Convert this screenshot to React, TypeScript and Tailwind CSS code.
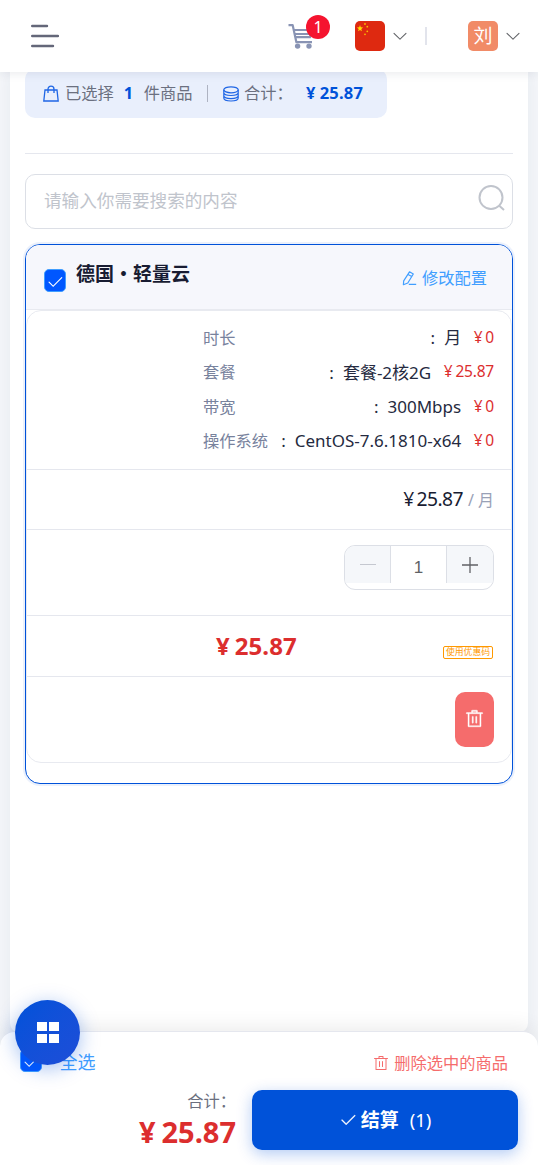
import type { ReactNode } from "react";

const CHECK =
  "M406.656 706.944 195.84 496.256a32 32 0 1 0-45.248 45.248l256 256 512-512a32 32 0 0 0-45.248-45.248L406.592 706.944z";
const TRASH =
  "M160 256H96a32 32 0 0 1 0-64h256V95.936a32 32 0 0 1 32-32h256a32 32 0 0 1 32 32V192h256a32 32 0 1 1 0 64h-64v672a32 32 0 0 1-32 32H192a32 32 0 0 1-32-32zm448-64v-64H416v64zM224 896h576V256H224zm192-128a32 32 0 0 1-32-32V416a32 32 0 0 1 64 0v320a32 32 0 0 1-32 32m192 0a32 32 0 0 1-32-32V416a32 32 0 0 1 64 0v320a32 32 0 0 1-32 32";
const ARROW_DOWN =
  "M831.872 340.864 512 652.672 192.128 340.864a30.592 30.592 0 0 0-42.752 0 29.12 29.12 0 0 0 0 41.6L489.664 714.24a32 32 0 0 0 44.672 0l340.288-331.712a29.12 29.12 0 0 0 0-41.728 30.592 30.592 0 0 0-42.752 0z";

function Glyph({ d, className }: { d: string; className: string }) {
  return (
    <svg viewBox="0 0 1024 1024" fill="currentColor" className={className}>
      <path d={d} />
    </svg>
  );
}

function Price({ value, className, yen }: { value: string; className: string; yen: string }) {
  return (
    <span className={`flex whitespace-nowrap ${className}`}>
      <span className={yen}>¥</span>
      <span>{value}</span>
    </span>
  );
}

function Checkbox({ className }: { className: string }) {
  return (
    <span className={`flex h-[22.5px] w-[21.5px] shrink-0 items-center justify-center rounded-[5px] border border-[#409eff] bg-[#0057ff] text-white ${className}`}>
      <Glyph d={CHECK} className="mt-[3px] h-[18px] w-[18px] shrink-0" />
    </span>
  );
}

function Header() {
  return (
    <header className="relative z-10 flex h-[72px] shrink-0 items-center bg-white shadow-[0_1px_10px_rgba(30,35,70,0.1)]">
      <svg viewBox="0 0 28 24" className="ml-[31px] h-6 w-7" stroke="#646779" strokeWidth="2.4" strokeLinecap="round">
        <path d="M1.2 2H16M1.2 12H27M1.2 22H22" />
      </svg>
      <div className="relative ml-[229px] h-[25px] w-[26px]">
        <svg viewBox="0 0 26 25" className="h-[25px] w-[26px]" fill="none" stroke="#8994b4" strokeWidth="2.2">
          <path d="M.5 1.2H4.7L8.4 18.2H24M5.8 6H23.5L22 13.2H7.5M6.7 10H22" strokeLinejoin="round" />
          <circle cx="9.6" cy="22.1" r="2.7" fill="#8994b4" stroke="none" />
          <circle cx="21" cy="22.1" r="2.7" fill="#8994b4" stroke="none" />
        </svg>
        <span className="absolute top-[-9px] left-[18px] flex h-6 w-6 items-center justify-center rounded-full bg-[#f5142f] text-[16px] leading-none text-white">
          1
        </span>
      </div>
      <svg viewBox="0 0 30 30" className="ml-[41px] h-[30px] w-[30px] rounded-[5px]">
        <rect width="30" height="30" fill="#de2910" />
        <g fill="#ffde00">
          <path d="M5 4 5.8 6.3 8.1 6.4 6.3 7.9 6.9 10.3 5 9 3.1 10.3 3.7 7.9 1.9 6.4 4.2 6.3Z" />
          <g opacity=".8">
            <circle cx="10" cy="3" r=".9" />
            <circle cx="12.3" cy="5.7" r=".9" />
            <circle cx="12.3" cy="10.3" r=".9" />
            <circle cx="10" cy="13.3" r=".9" />
          </g>
        </g>
      </svg>
      <Glyph d={ARROW_DOWN} className="ml-[6px] h-[18px] w-[18px] text-[#606266]" />
      <span className="ml-[16px] h-[18px] w-[2px] bg-[#e2e4ec]" />
      <span className="ml-[41px] flex h-[30px] w-[30px] items-center justify-center rounded-[5px] bg-[#f18b67] text-[19px] leading-none text-white">
        刘
      </span>
      <Glyph d={ARROW_DOWN} className="ml-[6px] h-[18px] w-[18px] text-[#606266]" />
    </header>
  );
}

function Summary() {
  return (
    <div className="mt-[-3px] flex h-[49px] w-[362px] items-center rounded-[10px] bg-[#e9effc] pl-[18px] text-[16.25px] text-[#6b7080]">
      <svg viewBox="0 0 16 17" className="h-[17px] w-4" fill="none" stroke="#1f66e5" strokeWidth="1.3">
        <path d="M2 5H14L15.2 16H.8ZM5 8V4.2a3 3 0 0 1 6 0V8" />
      </svg>
      <span className="ml-[6px]">已选择</span>
      <span className="ml-[10px] w-5 font-bold text-[#0052d9]">1</span>
      <span>件商品</span>
      <span className="ml-[14px] h-[17px] w-[1.5px] bg-[#aeb3c2]" />
      <svg viewBox="0 0 16 16" className="ml-[15px] h-4 w-4" fill="none" stroke="#1f66e5" strokeWidth="1.2">
        <ellipse cx="8" cy="3.8" rx="7.2" ry="3" />
        <path d="M.8 3.8V12c0 4 14.4 4 14.4 0V3.8M.8 6.5c0 4 14.4 4 14.4 0M.8 9.6c0 4 14.4 4 14.4 0" />
      </svg>
      <span className="ml-[5px] w-[62px]">合计：</span>
      <Price value="25.87" yen="mr-[4px]" className="text-[16.5px] font-bold tracking-[0.2px] text-[#0052d9]" />
    </div>
  );
}

const SPECS = [
  { label: "时长", value: "月", price: "0" },
  { label: "套餐", value: "套餐-2核2G", price: "25.87" },
  { label: "带宽", value: "300Mbps", price: "0" },
  { label: "操作系统", value: "CentOS-7.6.1810-x64", price: "0" },
];

function Section({ className, children }: { className: string; children: ReactNode }) {
  return <div className={`flex border-b border-[#e5e7ee] pr-[17px] ${className}`}>{children}</div>;
}

function ProductCard() {
  return (
    <section className="mt-[15px] flex h-[540px] flex-col overflow-hidden rounded-[15px] border border-[#0052d9] bg-white shadow-[0_0_0_2px_rgba(0,82,217,0.08)]">
      <div className="flex h-[65px] shrink-0 border-b border-[#e8eaf0] bg-[#f6f7fc] pl-[18px]">
        <Checkbox className="mt-6" />
        <h2 className="mt-4 ml-[10.5px] text-[19px] leading-[26px] font-bold text-[#181c32]">德国・轻量云</h2>
        <div className="mt-[21px] mr-[25px] ml-auto flex h-6 items-center text-[16.25px] text-[#409eff]">
          <svg viewBox="0 0 15 16" className="mr-[5px] h-4 w-[15px]" fill="none" stroke="currentColor" strokeWidth="1.2">
            <path d="M7.5 1.8 11.3 4 5.8 13 1.4 14.7 1.7 10.8ZM6 4.4 9.8 6.6M6.8 14.3H14.2" strokeLinejoin="round" />
          </svg>
          修改配置
        </div>
      </div>
      <div className="h-[453px] overflow-hidden rounded-[15px] border border-[#e8eaf0] bg-white">
        <Section className="h-[159px] flex-col items-end pt-[10px]">
          {SPECS.map((s) => (
            <div key={s.label} className="flex h-[34.3px] w-[291px] items-center text-[17px] text-[#252a40]">
              <span className="text-[16.25px] text-[#78829d]">{s.label}</span>
              <span className="mr-[9px] ml-auto">:</span>
              <span className="whitespace-nowrap">{s.value}</span>
              <Price value={s.price} yen="mr-[3px]" className="mb-px ml-[12.5px] text-[15.5px] tracking-[-0.2px] text-[#dc2e2e]" />
            </div>
          ))}
        </Section>
        <Section className="h-[60px] items-center justify-end text-[#181c32]">
          <Price value="25.87" yen="mr-[3px]" className="mb-px text-[19.3px] tracking-[-0.6px]" />
          <span className="ml-[5px] text-[16px] text-[#99a1b7]">/ 月</span>
        </Section>
        <Section className="h-[86px] items-start justify-end pt-[15px]">
          <div className="flex h-[45px] w-[150px] overflow-hidden rounded-[11px] border border-[#dcdfe6]">
            <span className="flex h-[37px] w-[46px] items-center justify-center border-r border-[#dcdfe6] bg-[#f5f7fa]">
              <span className="h-[1.5px] w-4 bg-[#c5c8d0]" />
            </span>
            <span className="flex flex-1 items-center justify-center font-['Liberation_Sans'] text-[17px] text-[#606266]">1</span>
            <span className="flex h-[37px] w-[47px] items-center justify-center border-l border-[#dcdfe6] bg-[#f5f7fa]">
              <svg viewBox="0 0 16 16" className="h-4 w-4" stroke="#606266" strokeWidth="1.3">
                <path d="M0 8H16M8 0V16" />
              </svg>
            </span>
          </div>
        </Section>
        <Section className="h-[61px] items-center pl-[189px]">
          <Price value="25.87" yen="mr-[5px]" className="text-[24px] font-bold tracking-[0.05px] text-[#dc2e2e]" />
          <span className="mt-[13px] mr-[1px] ml-auto flex h-[13px] w-[50px] items-center justify-center rounded-[2px] border border-[#ff9900] text-[8.8px] leading-none whitespace-nowrap text-[#ff9900]">
            使用优惠码
          </span>
        </Section>
        <div className="flex h-[86px] justify-end pt-[15px] pr-[17px]">
          <button className="flex h-[55px] w-[39px] items-center justify-center rounded-[10px] bg-[#f56c6c] text-white">
            <Glyph d={TRASH} className="mb-[2px] h-[19px] w-[19px] stroke-white [stroke-width:20]" />
          </button>
        </div>
      </div>
    </section>
  );
}

function Footer() {
  return (
    <footer className="relative z-10 mt-[-9px] flex h-[134px] shrink-0 flex-col rounded-t-[15px] border-t border-[#e5e7ee] bg-white shadow-[0_-4px_20px_rgba(0,0,0,0.08)]">
      <div className="flex h-[58px] items-start pr-[30px] pl-5">
        <Checkbox className="mt-[17px]" />
        <span className="mt-[16px] ml-[18px] text-[18px] leading-7 text-[#409eff]">全选</span>
        <div className="mt-[19px] ml-auto flex items-center text-[16.25px] leading-6 text-[#f56c6c]">
          <Glyph d={TRASH} className="mr-[5px] mb-px h-4 w-4" />
          删除选中的商品
        </div>
      </div>
      <div className="flex justify-end pr-5">
        <div className="mr-4 flex flex-col items-end">
          <span className="h-[23px] text-[16.25px] leading-[23px] text-[#6b7080]">合计：</span>
          <Price value="25.87" yen="mr-[6px]" className="text-[29px] leading-[38px] font-bold text-[#dc2e2e]" />
        </div>
        <button className="flex h-[60px] w-[266px] items-center justify-center rounded-[10px] bg-[#0052d9] text-[19px] text-white shadow-[0_4px_15px_rgba(0,82,217,0.3)]">
          <Glyph d={CHECK} className="mr-[4px] h-[18px] w-[18px] stroke-white [stroke-width:16]" />
          <span className="font-bold">结算</span>
          <span className="ml-[11px] text-[18.5px]">(1)</span>
        </button>
      </div>
      <div className="absolute top-[-32px] left-[15px] flex h-[65px] w-[65px] items-center justify-center rounded-full bg-linear-to-br from-[#0052d9] to-[#1d4ed8] shadow-[0_4px_20px_rgba(0,82,217,0.35)]">
        <svg viewBox="0 0 22 21" className="h-[21px] w-[22px]" fill="white">
          <path d="M0 0H10V9H0ZM12 0H22V9H12ZM0 12H10V21H0ZM12 12H22V21H12Z" />
        </svg>
      </div>
    </footer>
  );
}

export default function App() {
  return (
    <div className="flex h-[1165px] w-[538px] flex-col overflow-hidden bg-[#f5f7fa] font-['Noto_Sans','Noto_Sans_CJK_SC',sans-serif]">
      <Header />
      <main className="h-[968px] shrink-0 px-[10px]">
        <div className="h-[964px] rounded-b-[10px] bg-white px-[15px] shadow-[0_0_20px_rgba(30,40,80,0.07)]">
          <Summary />
          <div className="mt-[35px] h-px bg-[#e5e7ee]" />
          <div className="mt-5 flex h-[55px] items-center rounded-[10px] border border-[#dcdfe6] pr-[6px] pl-[18px] text-[17.6px] text-[#c0c4cc]">
            <span className="mb-[2px]">请输入你需要搜索的内容</span>
            <svg viewBox="0 0 28 28" className="mb-[7px] ml-auto h-7 w-7" fill="none" stroke="#c0c4cc" strokeWidth="2">
              <circle cx="13" cy="13.5" r="11.5" />
              <path d="m21 21.5 5 4.5" />
            </svg>
          </div>
          <ProductCard />
        </div>
      </main>
      <Footer />
    </div>
  );
}
